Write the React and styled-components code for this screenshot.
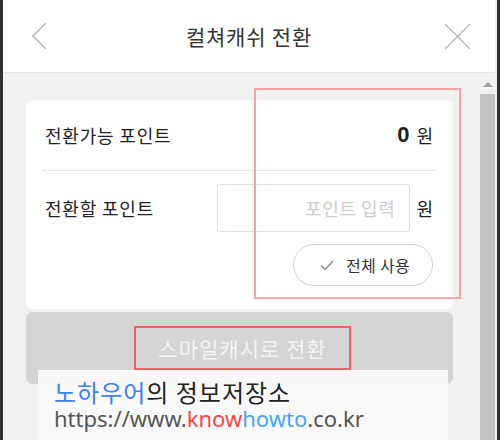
import React from 'react';
import styled, { createGlobalStyle } from 'styled-components';

const Global = createGlobalStyle`
  html, body { margin: 0; padding: 0; }
  body {
    font-family: "Noto Sans CJK KR", "Noto Sans", sans-serif;
    background: #2c2c2c;
  }
`;

const Frame = styled.div`
  position: relative;
  width: 500px;
  height: 440px;
  overflow: hidden;
  display: flex;
  background: #2f2f2f;
`;
const Edge = styled.div`
  width: ${({ w }) => w}px;
  flex: none;
  background: #303030;
`;
const Main = styled.div`
  flex: 1;
  display: flex;
  flex-direction: column;
  background: #f1f1f1;
`;
const Header = styled.div`
  height: 72px;
  flex: none;
  background: #fff;
  border-bottom: 1px solid #e4e4e4;
  display: flex;
  align-items: center;
  justify-content: space-between;
  padding: 0 23px 0 23px;
  margin-right: 2px;
`;
const Title = styled.h1`
  margin: 0;
  font-size: 21px;
  font-weight: 400;
  color: #333;
  letter-spacing: 0.8px;
`;
const IconBtn = styled.div`
  width: 28px;
  height: 28px;
  display: flex;
  align-items: center;
  justify-content: center;
`;
const Body = styled.div`
  flex: 1;
  display: flex;
`;
const Content = styled.div`
  flex: 1;
  padding: 27px 27px 0 23px;
`;
const Scroll = styled.div`
  width: 15px;
  margin-right: 2px;
  display: flex;
  flex-direction: column;
  align-items: center;
`;
const Arrow = styled.div`
  width: 0;
  height: 0;
  border-left: 5px solid transparent;
  border-right: 5px solid transparent;
  border-bottom: 5px solid #a3a3a3;
  margin: 9px 0 7px;
`;
const Thumb = styled.div`
  flex: 1;
  width: 15px;
  background: #c1c1c1;
`;
const Card = styled.div`
  background: #fff;
  border-radius: 6px;
  padding: 0 20px 23px 19px;
`;
const Row = styled.div`
  display: flex;
  align-items: center;
  height: ${({ h }) => h}px;
  padding-top: ${({ pt }) => pt || 0}px;
`;
const Label = styled.div`
  flex: 1;
  font-size: 18px;
  color: #222;
  letter-spacing: 0.8px;
`;
const Amount = styled.span`
  font-family: "Liberation Sans", Arial, sans-serif;
  font-size: 22px;
  font-weight: 700;
  color: #222;
  margin-right: 7px;
`;
const Unit = styled.span`
  font-size: 18px;
  color: #222;
`;
const Divider = styled.div`
  height: 0;
  border-top: 1px dotted #cfcfcf;
  margin: 0 -2px 0 -2px;
`;
const Input = styled.input`
  width: 193px;
  height: 48px;
  box-sizing: border-box;
  border: 1px solid #dedede;
  border-radius: 3px;
  padding: 0 14px;
  text-align: right;
  font-family: inherit;
  font-size: 18px;
  letter-spacing: 0.6px;
  margin-right: 6px;
  outline: none;
  &::placeholder { color: #cdcdcd; }
`;
const PillRow = styled.div`
  display: flex;
  justify-content: flex-end;
  margin-top: 12px;
`;
const Pill = styled.button`
  width: 140px;
  height: 42px;
  border: 1px solid #d0d0d0;
  border-radius: 21px;
  background: #fff;
  display: flex;
  align-items: center;
  justify-content: center;
  gap: 12px;
  font-family: inherit;
  font-size: 16px;
  color: #333;
  padding: 0 0 0 4px;
  letter-spacing: 0.3px;
`;
const Submit = styled.div`
  margin-top: 3px;
  height: 72px;
  border-radius: 6px;
  background: #d5d5d5;
  display: flex;
  align-items: center;
  justify-content: center;
`;
const SubmitText = styled.span`
  border: 2px solid #f25f5f;
  padding: 5px 22px;
  font-size: 21px;
  color: #f4f4f4;
  letter-spacing: 1px;
  margin-left: 6px;
`;
const Highlight = styled.div`
  position: absolute;
  left: 254px;
  top: 88px;
  width: 203px;
  height: 207px;
  border: 2px solid #f7a3a3;
`;
const Watermark = styled.div`
  position: absolute;
  left: 38px;
  top: 370px;
  width: 394px;
  height: 70px;
  padding-left: 16px;
  background: rgba(249, 249, 249, 0.96);
`;
const WmTitle = styled.div`
  font-size: 24px;
  line-height: 26px;
  margin-top: 9px;
  color: #222;
  letter-spacing: 1px;
`;
const WmUrl = styled.div`
  font-family: "Noto Sans", sans-serif;
  font-size: 22px;
  line-height: 24px;
  margin-top: 1px;
  color: #555;
`;
const C = styled.span`
  color: ${({ c }) => c};
`;

export default function App() {
  return (
    <>
      <Global />
      <Frame>
        <Edge w={3} />
        <Main>
          <Header>
            <IconBtn>
              <svg width="16" height="28" viewBox="0 0 16 28">
                <polyline points="14,1 1,14 14,27" fill="none" stroke="#bdbdbd" strokeWidth="1.6" />
              </svg>
            </IconBtn>
            <Title>컬쳐캐쉬 전환</Title>
            <IconBtn>
              <svg width="27" height="27" viewBox="0 0 27 27">
                <path d="M1 1L26 26M26 1L1 26" stroke="#bdbdbd" strokeWidth="1.6" fill="none" />
              </svg>
            </IconBtn>
          </Header>
          <Body>
            <Content>
              <Card>
                <Row h={70}>
                  <Label>전환가능 포인트</Label>
                  <Amount>0</Amount>
                  <Unit>원</Unit>
                </Row>
                <Divider />
                <Row h={48} pt={13}>
                  <Label>전환할 포인트</Label>
                  <Input placeholder="포인트 입력" />
                  <Unit>원</Unit>
                </Row>
                <PillRow>
                  <Pill>
                    <svg width="14" height="11" viewBox="0 0 14 11">
                      <polyline points="1,5.5 5,9.5 13,1" fill="none" stroke="#8a8a8a" strokeWidth="1.5" />
                    </svg>
                    전체 사용
                  </Pill>
                </PillRow>
              </Card>
              <Submit>
                <SubmitText>스마일캐시로 전환</SubmitText>
              </Submit>
            </Content>
            <Scroll>
              <Arrow />
              <Thumb />
            </Scroll>
          </Body>
        </Main>
        <Edge w={3} />
        <Highlight />
        <Watermark>
          <WmTitle>
            <C c="#3f7ff2">노하우어</C>의 정보저장소
          </WmTitle>
          <WmUrl>
            https://www.<C c="#f04848">know</C><C c="#4aa3f2">howto</C>.co.kr
          </WmUrl>
        </Watermark>
      </Frame>
    </>
  );
}
